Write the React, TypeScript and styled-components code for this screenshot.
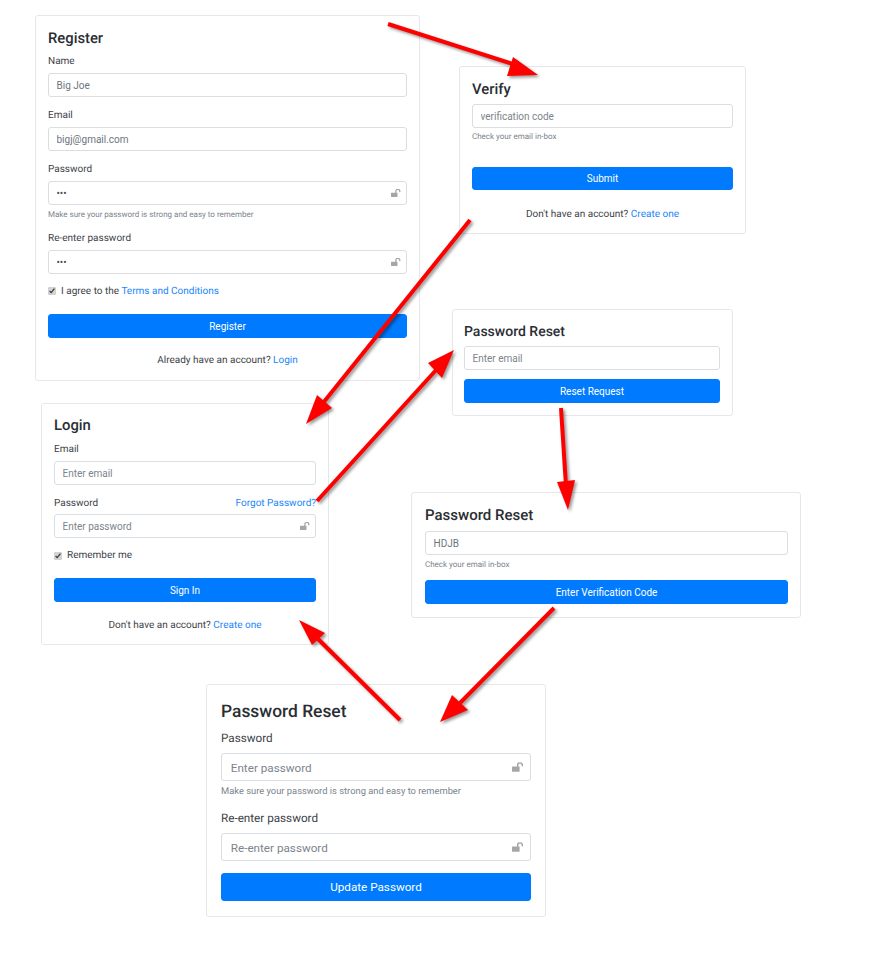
import styled, {createGlobalStyle} from "styled-components";

interface CardProps {
    $x: number;
    $y: number;
    $w: number;
    $fs: number;
    $pt: number;
    $pb: number;
    $pl: number;
    $pr: number;
    $ctl: number;
}

interface GapProps {
    $mt?: number;
}

const GlobalStyle = createGlobalStyle`
    html, body {
        margin: 0;
        background: #fff;
    }
    body {
        font-family: Roboto, "Noto Sans", sans-serif;
        color: #212529;
        text-rendering: geometricPrecision;
    }
`

// free canvas: the cards are placed like nodes of a flow diagram
const Canvas = styled.div`
    position: relative;
    width: 878px;
    height: 960px;
    overflow: hidden;
`

const Card = styled.div<CardProps>`
    position: absolute;
    left: ${p => p.$x}px;
    top: ${p => p.$y}px;
    width: ${p => p.$w}px;
    box-sizing: border-box;
    padding: ${p => p.$pt}px ${p => p.$pr}px ${p => p.$pb}px ${p => p.$pl}px;
    border: 1px solid #e5e7e9;
    border-radius: 3px;
    background: #fff;
    font-size: ${p => p.$fs}px;
    line-height: 1.5;
    --ctl: ${p => p.$ctl}px;
    --fs: ${p => p.$fs}px;
`

const Title = styled.h2<{$size: number; $lh: number}>`
    margin: 0;
    font-size: ${p => p.$size}px;
    line-height: ${p => p.$lh}px;
    font-weight: 500;
    color: #2a2e33;
`

const Label = styled.div<GapProps>`
    margin-top: ${p => p.$mt ?? 0}px;
    color: #3d4247;
`

const LabelRow = styled(Label)`
    display: flex;
    justify-content: space-between;
`

const Control = styled.div<GapProps>`
    position: relative;
    margin-top: ${p => p.$mt ?? 0}px;
    height: var(--ctl);
`

const Input = styled.input`
    display: block;
    width: 100%;
    height: 100%;
    box-sizing: border-box;
    padding: 1px calc(var(--fs) * 0.75) 0;
    border: 1px solid #dadde1;
    border-radius: 3px;
    background: #fff;
    font: inherit;
    color: #6c757d;
    outline: none;
    &[type="password"] {
        color: #495057;
    }
    &::placeholder {
        color: #7b848c;
        opacity: 1;
    }
`

const LockSvg = styled.svg`
    position: absolute;
    right: calc(var(--fs) * 0.65);
    top: 50%;
    width: calc(var(--fs) * 1);
    height: calc(var(--fs) * 0.8);
    transform: translateY(-50%);
`

const Hint = styled.div<GapProps>`
    margin-top: ${p => p.$mt ?? 0}px;
    font-size: 0.8em;
    color: #7b848c;
`

const CheckRow = styled.label<GapProps>`
    display: flex;
    align-items: center;
    gap: 5px;
    margin-top: ${p => p.$mt ?? 0}px;
    color: #3d4247;
`

const Check = styled.input`
    width: 8px;
    height: 8px;
    margin: 0;
    accent-color: #d4d4d4;
`

const Button = styled.button<GapProps>`
    display: block;
    width: 100%;
    height: var(--ctl);
    margin-top: ${p => p.$mt ?? 0}px;
    padding: 1px 0 0;
    border: 1px solid #007bff;
    border-radius: 3px;
    background: #007bff;
    font: inherit;
    color: #fff;
`

const Footer = styled.div<GapProps>`
    margin-top: ${p => p.$mt ?? 0}px;
    text-align: center;
    color: #3d4247;
`

const Link = styled.a`
    color: #1a86fb;
    text-decoration: none;
`

const Arrows = styled.svg`
    position: absolute;
    left: 0;
    top: 0;
    pointer-events: none;
    filter: drop-shadow(2px 2px 1.5px rgba(0, 0, 0, 0.4));
`

const arrowList = [
    {tail: "388,24 522,67", head: "513,57 507,76 538,75"},
    {tail: "470,220 323,403", head: "317,395 332,408 306,424"},
    {tail: "317,501 437,369", head: "428,363 442,378 454,350"},
    {tail: "561,408 566,486", head: "557,482 575,480 568,510"},
    {tail: "554,608 460,703", head: "452,695 468,710 440,722"},
    {tail: "400,720 318,639", head: "325,633 312,645 299,620"},
];

// open padlock shown at the right end of password inputs
function Lock() {
    return (
        <LockSvg viewBox="0 0 12 9.6">
            <rect x="0" y="4.4" width="7.8" height="5.2" rx="0.5" fill="#a6a6a6" />
            <path d="M5.8 4.8V2.9a2.4 2.4 0 0 1 4.8 0V4" fill="none" stroke="#a6a6a6" strokeWidth="1.5" />
        </LockSvg>
    )
}

export default function App() {
    return (
        <Canvas>
            <GlobalStyle />

            <Card $x={35} $y={15} $w={385} $fs={10} $pt={13} $pb={11.5} $pl={12} $pr={12} $ctl={24}>
                <Title $size={14.8} $lh={18.6}>Register</Title>
                <Label $mt={6}>Name</Label>
                <Control $mt={4.5}><Input readOnly value="Big Joe" /></Control>
                <Label $mt={11}>Email</Label>
                <Control $mt={4}><Input readOnly value="bigj@gmail.com" /></Control>
                <Label $mt={11}>Password</Label>
                <Control $mt={4}><Input readOnly type="password" value="abc" /><Lock /></Control>
                <Hint $mt={3.5}>Make sure your password is strong and easy to remember</Hint>
                <Label $mt={10.5}>Re-enter password</Label>
                <Control $mt={3.5}><Input readOnly type="password" value="abc" /><Lock /></Control>
                <CheckRow $mt={10}><Check type="checkbox" readOnly checked /><span>I agree to the <Link>Terms and Conditions</Link></span></CheckRow>
                <Button $mt={15}>Register</Button>
                <Footer $mt={15.5}>Already have an account? <Link>Login</Link></Footer>
            </Card>

            <Card $x={459} $y={66} $w={287} $fs={10} $pt={12.5} $pb={11.5} $pl={12} $pr={12} $ctl={23.5}>
                <Title $size={14.8} $lh={18.6}>Verify</Title>
                <Control $mt={6}><Input readOnly placeholder="verification code" /></Control>
                <Hint $mt={3}>Check your email in-box</Hint>
                <Button $mt={24}>Submit</Button>
                <Footer $mt={16.5}>Don't have an account? <Link>Create one</Link></Footer>
            </Card>

            <Card $x={452} $y={309} $w={281} $fs={10} $pt={12.5} $pb={12} $pl={11} $pr={12} $ctl={24}>
                <Title $size={14} $lh={18}>Password Reset</Title>
                <Control $mt={5}><Input readOnly placeholder="Enter email" /></Control>
                <Button $mt={9}>Reset Request</Button>
            </Card>

            <Card $x={41} $y={403} $w={288} $fs={10} $pt={11.5} $pb={11} $pl={12} $pr={12} $ctl={24}>
                <Title $size={14.8} $lh={18.6}>Login</Title>
                <Label $mt={8}>Email</Label>
                <Control $mt={3.5}><Input readOnly placeholder="Enter email" /></Control>
                <LabelRow $mt={11}>Password<Link>Forgot Password?</Link></LabelRow>
                <Control $mt={3.5}><Input readOnly placeholder="Enter password" /><Lock /></Control>
                <CheckRow $mt={10}><Check type="checkbox" readOnly checked />Remember me</CheckRow>
                <Button $mt={15}>Sign In</Button>
                <Footer $mt={16}>Don't have an account? <Link>Create one</Link></Footer>
            </Card>

            <Card $x={411} $y={492} $w={390} $fs={10} $pt={12.5} $pb={13} $pl={13} $pr={12} $ctl={24}>
                <Title $size={15} $lh={19.2}>Password Reset</Title>
                <Control $mt={6.5}><Input readOnly value="HDJB" /></Control>
                <Hint $mt={4}>Check your email in-box</Hint>
                <Button $mt={9}>Enter Verification Code</Button>
            </Card>

            <Card $x={206} $y={684} $w={340} $fs={11.7} $pt={15.5} $pb={15} $pl={14} $pr={14} $ctl={28}>
                <Title $size={17.4} $lh={22.2}>Password Reset</Title>
                <Label $mt={7}>Password</Label>
                <Control $mt={6}><Input readOnly placeholder="Enter password" /><Lock /></Control>
                <Hint $mt={4}>Make sure your password is strong and easy to remember</Hint>
                <Label $mt={10.5}>Re-enter password</Label>
                <Control $mt={6}><Input readOnly placeholder="Re-enter password" /><Lock /></Control>
                <Button $mt={12}>Update Password</Button>
            </Card>

            <Arrows width={878} height={960} viewBox="0 0 878 960">
                {arrowList.map(a => (
                    <g key={a.head}>
                        <polyline points={a.tail} fill="none" stroke="#ff0000" strokeWidth={4} />
                        <polygon points={a.head} fill="#ff0000" />
                    </g>
                ))}
            </Arrows>
        </Canvas>
    )
}
